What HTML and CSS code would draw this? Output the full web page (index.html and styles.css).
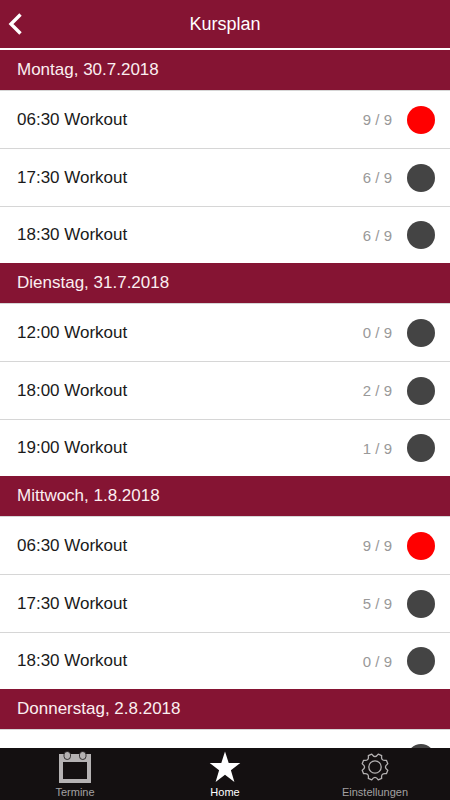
FILE: index.html
```html
<!doctype html>
<html lang="de">
	<head>
		<meta charset="UTF-8" />
		<meta name="viewport" content="width=device-width, initial-scale=1.0" />
		<title>Kursplan</title>
		<link rel="stylesheet" href="styles.css">
	</head>
	<body>
		<header class="navbar">
			<button class="back-btn" type="button" aria-label="Zurück">
				<svg width="14" height="22" viewBox="0 0 14 22" fill="none" stroke="#fff" stroke-width="3.4">
					<path d="M12.5 1.5 3 11 12.5 20.5" />
				</svg>
			</button>
			<h1>Kursplan</h1>
		</header>

		<main class="schedule">
			<section class="day">
				<h2>Montag, 30.7.2018</h2>
				<ul>
					<li><a class="course" href="#"><span class="name">06:30 Workout</span><span class="count">9 / 9</span><span class="dot full"></span></a></li>
					<li><a class="course" href="#"><span class="name">17:30 Workout</span><span class="count">6 / 9</span><span class="dot"></span></a></li>
					<li><a class="course" href="#"><span class="name">18:30 Workout</span><span class="count">6 / 9</span><span class="dot"></span></a></li>
				</ul>
			</section>

			<section class="day">
				<h2>Dienstag, 31.7.2018</h2>
				<ul>
					<li><a class="course" href="#"><span class="name">12:00 Workout</span><span class="count">0 / 9</span><span class="dot"></span></a></li>
					<li><a class="course" href="#"><span class="name">18:00 Workout</span><span class="count">2 / 9</span><span class="dot"></span></a></li>
					<li><a class="course" href="#"><span class="name">19:00 Workout</span><span class="count">1 / 9</span><span class="dot"></span></a></li>
				</ul>
			</section>

			<section class="day">
				<h2>Mittwoch, 1.8.2018</h2>
				<ul>
					<li><a class="course" href="#"><span class="name">06:30 Workout</span><span class="count">9 / 9</span><span class="dot full"></span></a></li>
					<li><a class="course" href="#"><span class="name">17:30 Workout</span><span class="count">5 / 9</span><span class="dot"></span></a></li>
					<li><a class="course" href="#"><span class="name">18:30 Workout</span><span class="count">0 / 9</span><span class="dot"></span></a></li>
				</ul>
			</section>

			<section class="day">
				<h2>Donnerstag, 2.8.2018</h2>
				<ul>
					<li><a class="course" href="#"><span class="name"></span><span class="dot"></span></a></li>
				</ul>
			</section>
		</main>

		<nav class="tabbar">
			<a class="tab" href="#">
				<svg width="32" height="32" viewBox="0 0 32 32">
					<path d="M0 3h32v29H0zM4 11v17h24V11z" fill="#b5b2b3" fill-rule="evenodd" />
					<rect x="5" y="0.5" width="6.5" height="8" rx="3.2" fill="#b5b2b3" stroke="#141011" stroke-width="0.8" />
					<rect x="20.5" y="0.5" width="6.5" height="8" rx="3.2" fill="#b5b2b3" stroke="#141011" stroke-width="0.8" />
				</svg>
				<span>Termine</span>
			</a>
			<a class="tab active" href="#">
				<svg width="32" height="32" viewBox="0 0 32 32">
					<path d="M16 0.5 19.7 12H31.3L21.9 19.2 25.4 31 16 23.8 6.6 31 10.1 19.2 0.7 12H12.3z" fill="#fff" />
				</svg>
				<span>Home</span>
			</a>
			<a class="tab" href="#">
				<svg width="32" height="32" viewBox="0 0 32 32" fill="none" stroke="#b5b2b3" stroke-width="1.3" stroke-linejoin="round">
					<path d="M12.7 3.2Q16 8 19.3 3.2L22.7 4.6Q21.7 10.3 27.4 9.3L28.8 12.7Q24 16 28.8 19.3L27.4 22.7Q21.7 21.7 22.7 27.4L19.3 28.8Q16 24 12.7 28.8L9.3 27.4Q10.3 21.7 4.6 22.7L3.2 19.3Q8 16 3.2 12.7L4.6 9.3Q10.3 10.3 9.3 4.6z" />
					<circle cx="16" cy="16" r="6.2" />
				</svg>
				<span>Einstellungen</span>
			</a>
		</nav>
	</body>
</html>
```
FILE: styles.css
```css
* {
	margin: 0;
	padding: 0;
	box-sizing: border-box;
}

body {
	display: flex;
	flex-direction: column;
	height: 100vh;
	font-family: "Liberation Sans", Arial, Helvetica, sans-serif;
	background: #fff;
	color: #1a1a1a;
}

a {
	color: inherit;
	text-decoration: none;
}

.navbar {
	display: grid;
	grid-template-columns: 48px 1fr 48px;
	align-items: center;
	height: 50px;
	flex-shrink: 0;
	background: #851433;
	border-bottom: 2px solid #fff;
	color: #fff;
}

.navbar h1 {
	font-size: 18px;
	font-weight: 400;
	line-height: 46px;
	text-align: center;
}

.back-btn {
	display: flex;
	align-items: center;
	height: 48px;
	padding-left: 8px;
	background: none;
	border: none;
	cursor: pointer;
}

.schedule {
	flex: 1;
	min-height: 0;
	overflow-y: auto;
	scrollbar-width: none;
}

.day h2 {
	padding: 0 17px;
	font-size: 17px;
	font-weight: 400;
	line-height: 40px;
	background: #851433;
	color: #fbeef0;
}

.day ul {
	list-style: none;
}

.day li {
	border-top: 1px solid #d6d6d6;
}

.course {
	display: flex;
	align-items: center;
	gap: 15px;
	height: 57px;
	padding: 0 15px 0 17px;
}

.day li:last-child .course {
	height: 56px;
}

.name {
	flex: 1;
	font-size: 17px;
}

.count {
	font-size: 15px;
	color: #999;
}

.dot {
	width: 28px;
	height: 28px;
	border-radius: 50%;
	background: #444;
}

.dot.full {
	background: #f00;
}

.tabbar {
	display: grid;
	grid-template-columns: repeat(3, 1fr);
	height: 52px;
	flex-shrink: 0;
	background: #141011;
}

.tab {
	display: flex;
	flex-direction: column;
	align-items: center;
	padding-top: 3px;
	font-size: 11px;
	line-height: 18px;
	color: #a3a0a1;
}

.tab.active {
	color: #fff;
}
```
